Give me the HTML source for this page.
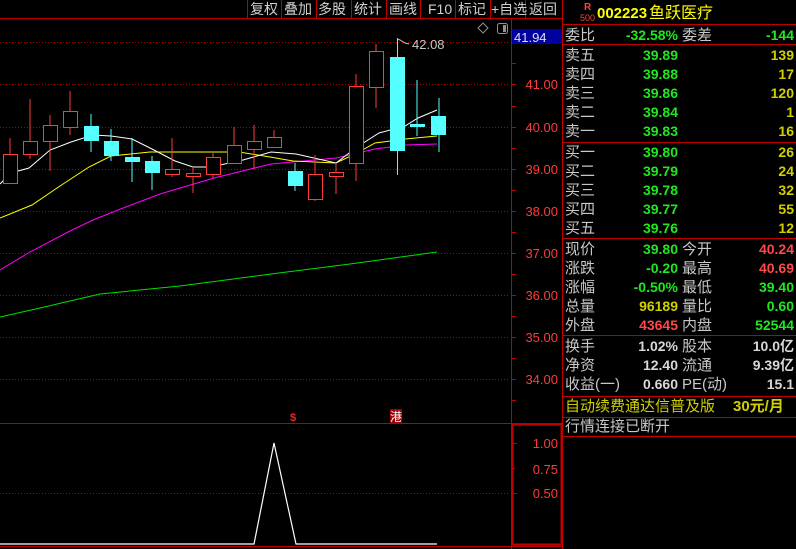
<!DOCTYPE html>
<html><head><meta charset="utf-8"><style>
html,body{margin:0;padding:0;background:#000;width:796px;height:549px;overflow:hidden}
svg{display:block}
text{font-family:"Liberation Sans","Noto Sans CJK SC",sans-serif}
.m{fill:#d0d0d0;font-size:14px}
.ax{fill:#ff3c3c;font-size:13px}
.l{fill:#c8c8c8;font-size:15px}
.g{fill:#1ee81e;font-size:14px;font-weight:bold}
.y{fill:#d0d000;font-size:14px;font-weight:bold}
.r{fill:#ff4848;font-size:14px;font-weight:bold}
.w{fill:#d8d8d8;font-size:14px;font-weight:bold}
</style></head><body>
<svg width="796" height="549" viewBox="0 0 796 549">
<g stroke="#b00000" stroke-width="1" stroke-dasharray="1,2">
<line x1="0" y1="42.5" x2="510" y2="42.5"/><line x1="0" y1="84.5" x2="510" y2="84.5"/>
<line x1="0" y1="127.5" x2="510" y2="127.5"/><line x1="0" y1="169.5" x2="510" y2="169.5"/>
<line x1="0" y1="211.5" x2="510" y2="211.5"/><line x1="0" y1="253.5" x2="510" y2="253.5"/>
<line x1="0" y1="295.5" x2="510" y2="295.5"/><line x1="0" y1="337.5" x2="510" y2="337.5"/>
<line x1="0" y1="379.5" x2="510" y2="379.5"/><line x1="0" y1="493.5" x2="510" y2="493.5"/>
</g>
<g stroke="#c00000" stroke-width="1" fill="none">
<line x1="0" y1="18.5" x2="562" y2="18.5"/>
<line x1="511.5" y1="18" x2="511.5" y2="549"/>
<line x1="562.5" y1="0" x2="562.5" y2="549"/>
<line x1="0" y1="423.5" x2="562" y2="423.5"/>
<line x1="0" y1="546.5" x2="562" y2="546.5"/>
<line x1="247.5" y1="0" x2="247.5" y2="18"/><line x1="281.5" y1="0" x2="281.5" y2="18"/>
<line x1="316.5" y1="0" x2="316.5" y2="18"/><line x1="351.5" y1="0" x2="351.5" y2="18"/>
<line x1="386.5" y1="0" x2="386.5" y2="18"/><line x1="420.5" y1="0" x2="420.5" y2="18"/>
<line x1="455.5" y1="0" x2="455.5" y2="18"/><line x1="490.5" y1="0" x2="490.5" y2="18"/>
<line x1="525.5" y1="0" x2="525.5" y2="18"/>
<rect x="512.5" y="424.5" width="49" height="120" stroke-width="2"/>
<line x1="563" y1="24.5" x2="796" y2="24.5"/><line x1="563" y1="44.5" x2="796" y2="44.5"/>
<line x1="563" y1="142.5" x2="796" y2="142.5"/><line x1="563" y1="238.5" x2="796" y2="238.5"/>
<line x1="563" y1="335.5" x2="796" y2="335.5"/><line x1="563" y1="396.5" x2="796" y2="396.5"/>
<line x1="563" y1="417.5" x2="796" y2="417.5"/><line x1="563" y1="436.5" x2="796" y2="436.5"/>
</g>
<g stroke="#c00000">
<line x1="512" y1="63.5" x2="516" y2="63.5"/><line x1="512" y1="84.5" x2="516" y2="84.5"/><line x1="512" y1="106.5" x2="516" y2="106.5"/>
<line x1="512" y1="127.5" x2="516" y2="127.5"/><line x1="512" y1="148.5" x2="516" y2="148.5"/><line x1="512" y1="169.5" x2="516" y2="169.5"/>
<line x1="512" y1="190.5" x2="516" y2="190.5"/><line x1="512" y1="211.5" x2="516" y2="211.5"/><line x1="512" y1="232.5" x2="516" y2="232.5"/>
<line x1="512" y1="253.5" x2="516" y2="253.5"/><line x1="512" y1="274.5" x2="516" y2="274.5"/><line x1="512" y1="295.5" x2="516" y2="295.5"/>
<line x1="512" y1="316.5" x2="516" y2="316.5"/><line x1="512" y1="337.5" x2="516" y2="337.5"/><line x1="512" y1="358.5" x2="516" y2="358.5"/>
<line x1="512" y1="379.5" x2="516" y2="379.5"/><line x1="512" y1="400.5" x2="516" y2="400.5"/>
<line x1="512" y1="443.5" x2="517" y2="443.5"/><line x1="512" y1="468.5" x2="515" y2="468.5"/><line x1="512" y1="493.5" x2="517" y2="493.5"/>
</g>
<g class="m">
<text x="250" y="14">复权</text><text x="284" y="14">叠加</text><text x="318" y="14">多股</text>
<text x="354" y="14">统计</text><text x="389" y="14">画线</text><text x="428" y="14">F10</text>
<text x="458" y="14">标记</text><text x="491" y="14">+自选</text><text x="529" y="14">返回</text>
</g>
<g class="ax" text-anchor="end">
<text x="558" y="89">41.00</text><text x="558" y="132">40.00</text><text x="558" y="174">39.00</text>
<text x="558" y="216">38.00</text><text x="558" y="258">37.00</text><text x="558" y="300">36.00</text>
<text x="558" y="342">35.00</text><text x="558" y="384">34.00</text>
<text x="558" y="448">1.00</text><text x="558" y="474">0.75</text><text x="558" y="498">0.50</text>
</g>
<rect x="512" y="29" width="50" height="15" fill="#0000a0"/>
<text x="514" y="42" fill="#e0e0e0" font-size="13">41.94</text>
<path d="M483 23 L488 28 L483 33 L478 28 Z" fill="none" stroke="#909090"/>
<rect x="497.5" y="23.5" width="10" height="10" rx="2" fill="none" stroke="#909090"/>
<rect x="503" y="25" width="3" height="7" fill="#909090"/>
<polyline fill="none" stroke="#00e000" stroke-width="1" points="0,317 40,308 100,294 180,286 271,274 350,264 437,252"/>
<polyline fill="none" stroke="#ff00ff" stroke-width="1" points="0,270 30,252 68,232 93,220 118,210 160,194 214,178 271,164 336,158 375,149 405,145 437,144"/>
<polyline fill="none" stroke="#ffff00" stroke-width="1" points="0,218 32,205 60,186 89,167 111,156 150,152 239,152 270,157 293,161 336,163 357,153 375,143 405,139 437,136"/>
<polyline fill="none" stroke="#ffffff" stroke-width="1" points="0,184 11,173 29,168 50,150 71,142 93,135 111,136 132,139 154,150 175,161 193,167 211,167 243,160 271,152 296,154 336,163 357,147 379,133 405,126 418,118 437,110"/>
<g stroke="#ff3c3c" fill="#000" stroke-width="1">
<line x1="10" y1="138" x2="10" y2="183"/><rect x="3.5" y="154.5" width="14" height="29"/>
<line x1="30" y1="99" x2="30" y2="159"/><rect x="23.5" y="141.5" width="14" height="13"/>
<line x1="50" y1="115" x2="50" y2="171"/><rect x="43.5" y="125.5" width="14" height="16"/>
<line x1="70" y1="91" x2="70" y2="135"/><rect x="63.5" y="111.5" width="14" height="16"/>
<line x1="172" y1="138" x2="172" y2="177"/><rect x="165.5" y="169.5" width="14" height="5"/>
<line x1="193" y1="167" x2="193" y2="193"/><rect x="186.5" y="173.5" width="14" height="3"/>
<line x1="213" y1="153" x2="213" y2="178"/><rect x="206.5" y="157.5" width="14" height="17"/>
<line x1="234" y1="127" x2="234" y2="163"/><rect x="227.5" y="145.5" width="14" height="18"/>
<line x1="254" y1="125" x2="254" y2="169"/><rect x="247.5" y="141.5" width="14" height="8"/>
<line x1="274" y1="130" x2="274" y2="147"/><rect x="267.5" y="137.5" width="14" height="10"/>
<line x1="315" y1="155" x2="315" y2="201"/><rect x="308.5" y="174.5" width="14" height="25"/>
<line x1="336" y1="163" x2="336" y2="194"/><rect x="329.5" y="172.5" width="14" height="4"/>
<line x1="356" y1="74" x2="356" y2="181"/><rect x="349.5" y="86.5" width="14" height="77"/>
<line x1="376" y1="44" x2="376" y2="108"/><rect x="369.5" y="51.5" width="14" height="36"/>
</g>
<g fill="#55ffff" stroke="#55ffff" stroke-width="1">
<line x1="91" y1="114" x2="91" y2="152"/><rect x="84" y="126" width="15" height="15" stroke="none"/>
<line x1="111" y1="129" x2="111" y2="161"/><rect x="104" y="141" width="15" height="15" stroke="none"/>
<line x1="132" y1="138" x2="132" y2="182"/><rect x="125" y="157" width="15" height="5" stroke="none"/>
<line x1="152" y1="156" x2="152" y2="190"/><rect x="145" y="161" width="15" height="12" stroke="none"/>
<line x1="295" y1="163" x2="295" y2="191"/><rect x="288" y="171" width="15" height="15" stroke="none"/>
<line x1="397.5" y1="38" x2="397.5" y2="175"/><rect x="390" y="57" width="15" height="94" stroke="none"/>
<line x1="417" y1="80" x2="417" y2="136"/><rect x="410" y="124" width="15" height="3" stroke="none"/>
<line x1="439" y1="98" x2="439" y2="152"/><rect x="431" y="116" width="15" height="19" stroke="none"/>
</g>
<path d="M397 39 L400 40 L405 43 L409 44" fill="none" stroke="#c0c0c0"/>
<text x="412" y="49" fill="#c8c8c8" font-size="13">42.08</text>
<text x="293" y="421" fill="#ff2020" font-size="11" text-anchor="middle" font-weight="bold">$</text>
<rect x="390" y="409" width="12" height="14" fill="#a00000"/>
<text x="396" y="421" fill="#fff" font-size="12" text-anchor="middle">港</text>
<polyline fill="none" stroke="#fff" stroke-width="1.2" points="0,544 254,544 274,443 296,544 437,544"/>
<text x="584" y="10" fill="#ff4040" font-size="10" font-weight="bold">R</text>
<text x="580" y="21" fill="#ff4040" font-size="9">500</text>
<text x="597" y="18" fill="#ffff00" font-size="15" font-weight="bold">002223</text>
<text x="649" y="18" fill="#ffff00" font-size="16">鱼跃医疗</text>
<g class="l">
<text x="565" y="40">委比</text><text x="682" y="40">委差</text>
<text x="565" y="60">卖五</text><text x="565" y="79">卖四</text><text x="565" y="98">卖三</text><text x="565" y="117">卖二</text><text x="565" y="136">卖一</text>
<text x="565" y="157">买一</text><text x="565" y="176">买二</text><text x="565" y="195">买三</text><text x="565" y="214">买四</text><text x="565" y="233">买五</text>
<text x="565" y="254">现价</text><text x="682" y="254">今开</text>
<text x="565" y="273">涨跌</text><text x="682" y="273">最高</text>
<text x="565" y="292">涨幅</text><text x="682" y="292">最低</text>
<text x="565" y="311">总量</text><text x="682" y="311">量比</text>
<text x="565" y="330">外盘</text><text x="682" y="330">内盘</text>
<text x="565" y="351">换手</text><text x="682" y="351">股本</text>
<text x="565" y="370">净资</text><text x="682" y="370">流通</text>
<text x="565" y="389">收益(一)</text><text x="682" y="389">PE(动)</text>
<text x="565" y="431">行情连接已断开</text>
</g>
<text x="565" y="411" fill="#d0d000" font-size="15">自动续费通达信普及版</text>
<text x="733" y="411" fill="#d0d000" font-size="15" font-weight="bold">30元/月</text>
<g text-anchor="end">
<text class="g" x="678" y="40">-32.58%</text><text class="g" x="794" y="40">-144</text>
<text class="g" x="678" y="60">39.89</text><text class="y" x="794" y="60">139</text>
<text class="g" x="678" y="79">39.88</text><text class="y" x="794" y="79">17</text>
<text class="g" x="678" y="98">39.86</text><text class="y" x="794" y="98">120</text>
<text class="g" x="678" y="117">39.84</text><text class="y" x="794" y="117">1</text>
<text class="g" x="678" y="136">39.83</text><text class="y" x="794" y="136">16</text>
<text class="g" x="678" y="157">39.80</text><text class="y" x="794" y="157">26</text>
<text class="g" x="678" y="176">39.79</text><text class="y" x="794" y="176">24</text>
<text class="g" x="678" y="195">39.78</text><text class="y" x="794" y="195">32</text>
<text class="g" x="678" y="214">39.77</text><text class="y" x="794" y="214">55</text>
<text class="g" x="678" y="233">39.76</text><text class="y" x="794" y="233">12</text>
<text class="g" x="678" y="254">39.80</text><text class="r" x="794" y="254">40.24</text>
<text class="g" x="678" y="273">-0.20</text><text class="r" x="794" y="273">40.69</text>
<text class="g" x="678" y="292">-0.50%</text><text class="g" x="794" y="292">39.40</text>
<text class="y" x="678" y="311">96189</text><text class="g" x="794" y="311">0.60</text>
<text class="r" x="678" y="330">43645</text><text class="g" x="794" y="330">52544</text>
<text class="w" x="678" y="351">1.02%</text><text class="w" x="794" y="351">10.0亿</text>
<text class="w" x="678" y="370">12.40</text><text class="w" x="794" y="370">9.39亿</text>
<text class="w" x="678" y="389">0.660</text><text class="w" x="794" y="389">15.1</text>
</g>
</svg>
</body></html>
